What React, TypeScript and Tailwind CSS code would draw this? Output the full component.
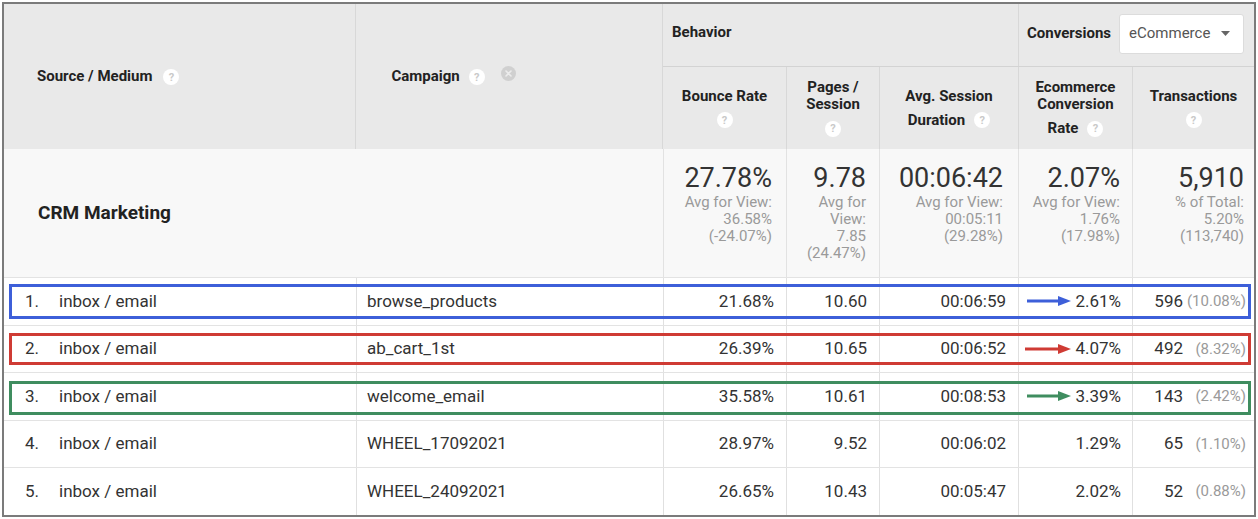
import React from 'react'

const COLS = 'grid grid-cols-[352px_307px_123px_93px_139px_114px_122px]'

type Row = {
  source: string
  campaign: string
  bounce: string
  pages: string
  duration: string
  ecom: string
  trans: string
  share: string
  mark?: 'blue' | 'red' | 'green'
}

const ROWS: Row[] = [
  { source: 'inbox / email', campaign: 'browse_products', bounce: '21.68%', pages: '10.60', duration: '00:06:59', ecom: '2.61%', trans: '596', share: '(10.08%)', mark: 'blue' },
  { source: 'inbox / email', campaign: 'ab_cart_1st', bounce: '26.39%', pages: '10.65', duration: '00:06:52', ecom: '4.07%', trans: '492', share: '(8.32%)', mark: 'red' },
  { source: 'inbox / email', campaign: 'welcome_email', bounce: '35.58%', pages: '10.61', duration: '00:08:53', ecom: '3.39%', trans: '143', share: '(2.42%)', mark: 'green' },
  { source: 'inbox / email', campaign: 'WHEEL_17092021', bounce: '28.97%', pages: '9.52', duration: '00:06:02', ecom: '1.29%', trans: '65', share: '(1.10%)' },
  { source: 'inbox / email', campaign: 'WHEEL_24092021', bounce: '26.65%', pages: '10.43', duration: '00:05:47', ecom: '2.02%', trans: '52', share: '(0.88%)' },
]

const MARK_BOX: Record<string, string> = {
  blue: 'top-[6px] bottom-[6px] border-[#3d5fd9]',
  red: 'top-[7px] bottom-[7px] border-[#cf3b34]',
  green: 'top-[8px] bottom-[5px] border-[#3f8d5f]',
}

const MARK_COLOR: Record<string, string> = {
  blue: '#3d5fd9',
  red: '#cf3b34',
  green: '#3f8d5f',
}

function Help() {
  return (
    <span className="inline-flex h-[16px] w-[16px] items-center justify-center rounded-full bg-white align-middle text-[11px] font-bold leading-none text-[#c9c9c9]">
      ?
    </span>
  )
}

function Remove() {
  return (
    <span className="relative -top-[4px] inline-flex h-[15px] w-[15px] items-center justify-center rounded-full bg-[#d0d0d0] align-middle">
      <svg width="7" height="7" viewBox="0 0 7 7">
        <path d="M1 1L6 6M6 1L1 6" stroke="#ececec" strokeWidth="1.6" strokeLinecap="round" />
      </svg>
    </span>
  )
}

function Arrow({ color, width }: { color: string; width: number }) {
  return (
    <svg width={width} height="12" viewBox={`0 0 ${width} 12`} className="mr-[4px]">
      <line x1="0" y1="6" x2={width - 10} y2="6" stroke={color} strokeWidth="3" />
      <polygon points={`${width - 13},1 ${width},6 ${width - 13},11`} fill={color} />
    </svg>
  )
}

function HeadCell({ lines, last }: { lines: string[]; last?: string }) {
  return (
    <div className="flex flex-col items-center justify-center border-l border-[#d8d8d8] text-center text-[15px] font-bold leading-[17px] text-[#222]">
      {lines.map((l) => (
        <div key={l}>{l}</div>
      ))}
      <div className="mt-[7px] flex h-[17px] items-center gap-[9px]">
        {last && <span>{last}</span>}
        <Help />
      </div>
    </div>
  )
}

function SummaryCell({ value, sub, pr }: { value: string; sub: string[]; pr: string }) {
  return (
    <div className={`border-l border-[#e2e2e2] pt-[14px] text-right ${pr}`}>
      <div className="text-[27px] leading-[31px] text-[#333]">{value}</div>
      {sub.map((s, i) => (
        <div key={i} className="text-[15px] leading-[17px] text-[#9a9a9a]">
          {s}
        </div>
      ))}
    </div>
  )
}

export default function App() {
  return (
    <div className="h-[519px] w-[1258px] bg-white pl-[2px] pt-[2px] font-['Roboto','Noto_Sans',sans-serif]">
      <div className="w-[1254px] border-2 border-[#7b7b7b]">
        {/* header */}
        <div className="flex h-[145px] bg-[#e9e9e9]">
          <div className="flex w-[352px] items-center pl-[33px] text-[15px] font-bold text-[#222]">
            <span>Source / Medium</span>
            <span className="ml-[11px]">
              <Help />
            </span>
          </div>
          <div className="flex w-[307px] items-center border-l border-[#d8d8d8] pl-[35px] text-[15px] font-bold text-[#222]">
            <span>Campaign</span>
            <span className="ml-[9px]">
              <Help />
            </span>
            <span className="ml-[16px]">
              <Remove />
            </span>
          </div>
          <div className="flex flex-1 flex-col border-l border-[#d8d8d8]">
            <div className="flex h-[62px]">
              <div className="w-[355px] pl-[9px] pt-[17px] text-[15px] font-bold text-[#222]">Behavior</div>
              <div className="flex flex-1 items-center border-l border-[#d8d8d8] pb-[3px] pl-[8px]">
                <span className="text-[15px] font-bold text-[#222]">Conversions</span>
                <div className="ml-[8px] flex h-[40px] w-[125px] items-center justify-between rounded-[3px] border border-[#dcdcdc] bg-white pl-[9px] pr-[13px] text-[15px] text-[#555]">
                  <span>eCommerce</span>
                  <svg width="9" height="5" viewBox="0 0 9 5">
                    <polygon points="0,0 9,0 4.5,5" fill="#666" />
                  </svg>
                </div>
              </div>
            </div>
            <div className="grid h-[83px] grid-cols-[123px_93px_139px_114px_122px] border-t border-[#d3d3d3] [&>*:first-child]:border-l-0">
              <HeadCell lines={['Bounce Rate']} />
              <HeadCell lines={['Pages /', 'Session']} />
              <HeadCell lines={['Avg. Session']} last="Duration" />
              <HeadCell lines={['Ecommerce', 'Conversion']} last="Rate" />
              <HeadCell lines={['Transactions']} />
            </div>
          </div>
        </div>

        {/* summary */}
        <div className={`${COLS} h-[128px] bg-[#f8f8f8]`}>
          <div className="col-span-2 flex items-center pl-[34px] text-[19px] font-bold text-[#222]">CRM Marketing</div>
          <SummaryCell value="27.78%" sub={['Avg for View:', '36.58%', '(-24.07%)']} pr="pr-[14px]" />
          <SummaryCell value="9.78" sub={['Avg for', 'View:', '7.85', '(24.47%)']} pr="pr-[13px]" />
          <SummaryCell value="00:06:42" sub={['Avg for View:', '00:05:11', '(29.28%)']} pr="pr-[15px]" />
          <SummaryCell value="2.07%" sub={['Avg for View:', '1.76%', '(17.98%)']} pr="pr-[12px]" />
          <SummaryCell value="5,910" sub={['% of Total:', '5.20%', '(113,740)']} pr="pr-[10px]" />
        </div>

        {/* rows */}
        {ROWS.map((r, i) => (
          <div key={i} className={`${COLS} relative h-[47.6px] border-t border-[#e3e3e3] bg-white text-[17px] text-[#333]`}>
            <div className="flex items-center pl-[21px]">
              <span className="w-[34px]">{i + 1}.</span>
              <span>{r.source}</span>
            </div>
            <div className="flex items-center border-l border-[#e0e0e0] pl-[10px]">{r.campaign}</div>
            <div className="flex items-center justify-end border-l border-[#e0e0e0] pr-[12px]">{r.bounce}</div>
            <div className="flex items-center justify-end border-l border-[#e0e0e0] pr-[12px]">{r.pages}</div>
            <div className="flex items-center justify-end border-l border-[#e0e0e0] pr-[12px]">{r.duration}</div>
            <div className="flex items-center justify-end border-l border-[#e0e0e0] pr-[11px]">
              {r.mark && <Arrow color={MARK_COLOR[r.mark]} width={r.mark === 'red' ? 46 : 44} />}
              <span>{r.ecom}</span>
            </div>
            <div className="flex items-center justify-end border-l border-[#e0e0e0] pr-[8px]">
              <span>{r.trans}</span>
              <span className="w-[63px] text-right text-[15px] text-[#9a9a9a]">{r.share}</span>
            </div>
            {r.mark && (
              <div className={`pointer-events-none absolute left-[5px] right-[3px] border-[3px] ${MARK_BOX[r.mark]}`} />
            )}
          </div>
        ))}
      </div>
    </div>
  )
}
